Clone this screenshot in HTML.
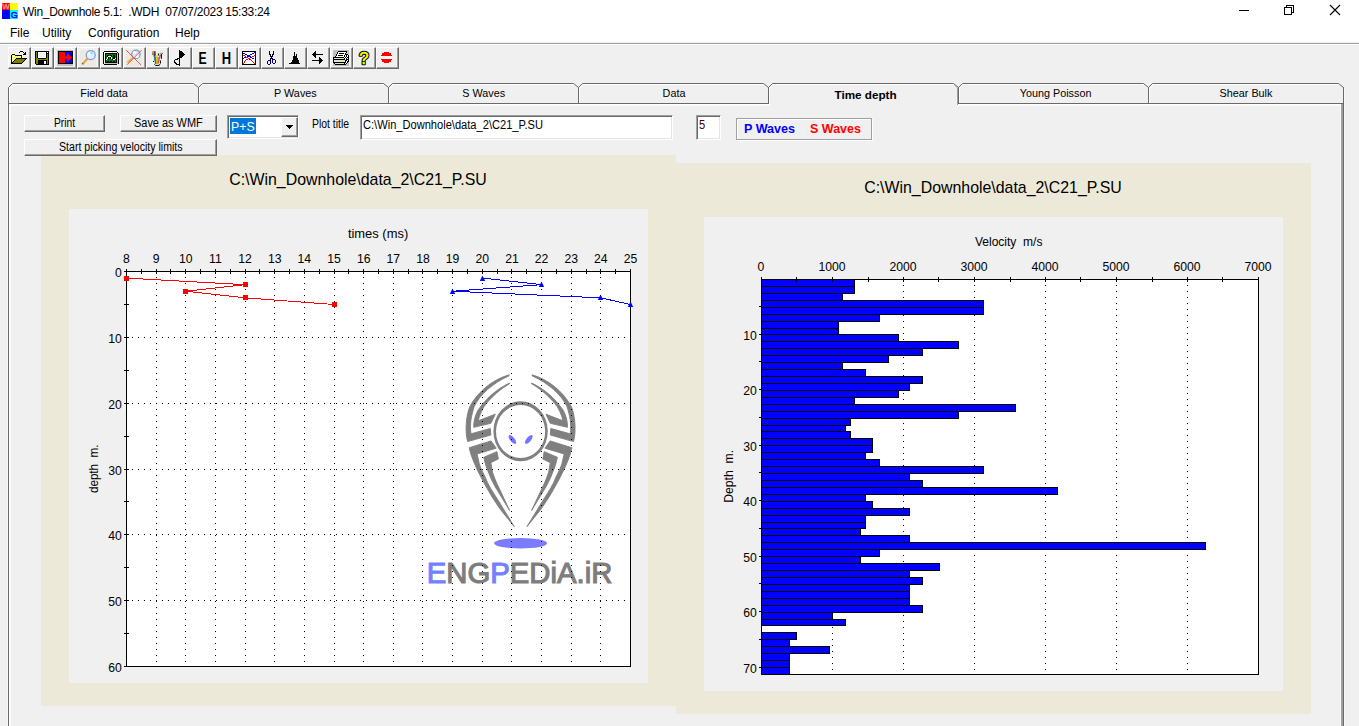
<!DOCTYPE html>
<html lang="en">
<head>
<meta charset="utf-8">
<title>Win_Downhole 5.1</title>
<style>
*{box-sizing:border-box;margin:0;padding:0}
html,body{width:1359px;height:726px;overflow:hidden;background:#f0f0f0;font-family:"Liberation Sans",sans-serif;color:#000}
.abs{position:absolute}
#win{position:relative;width:1359px;height:726px;background:#f0f0f0;overflow:hidden}
#titlebar{position:absolute;left:0;top:0;width:1359px;height:23px;background:#fff}
#menubar{position:absolute;left:0;top:23px;width:1359px;height:19px;background:#fff}
#titletext{position:absolute;left:23px;top:5px;font-size:12px;line-height:14px;white-space:pre;letter-spacing:-0.29px}
.menu{position:absolute;top:3px;font-size:12px;line-height:14px;white-space:pre}
#sep{position:absolute;left:0;top:43px;width:1359px;height:1px;background:#a0a0a0}
#sep2{position:absolute;left:0;top:44px;width:1359px;height:1px;background:#fff}
#toolbar{position:absolute;left:8px;top:47px;height:22px;width:392px}
.tb{position:absolute;top:0;width:23px;height:22px;background:#f0f0f0;border-top:1px solid #fff;border-left:1px solid #fff;border-right:1px solid #696969;border-bottom:1px solid #696969;box-shadow:inset -1px -1px 0 #a0a0a0}
.tb svg{position:absolute;left:1px;top:1px;width:18px;height:18px}
.tabtxt{position:absolute;top:87px;font-size:10.8px;line-height:13px;white-space:pre;text-align:center}
.btn{position:absolute;background:#f0f0f0;border-top:1px solid #fff;border-left:1px solid #fff;border-right:1px solid #696969;border-bottom:1px solid #696969;box-shadow:inset -1px -1px 0 #a0a0a0;font-size:11px;text-align:center;white-space:pre}
.sunken{position:absolute;background:#fff;border-top:1px solid #a0a0a0;border-left:1px solid #a0a0a0;border-right:1px solid #fff;border-bottom:1px solid #fff;box-shadow:inset 1px 1px 0 #696969, inset -1px -1px 0 #e3e3e3}
.cbsel{position:absolute;left:2px;top:2px;width:26px;height:16px;background:#0078d7}
.t{position:absolute;white-space:pre;line-height:normal;transform-origin:0 0}
.cbbtn{position:absolute;left:53px;top:1px;width:17px;height:20px;background:#f0f0f0;border-top:1px solid #fff;border-left:1px solid #fff;border-right:1px solid #696969;border-bottom:1px solid #696969;box-shadow:inset -1px -1px 0 #a0a0a0}
.cbbtn svg{position:absolute;left:4px;top:7px}
.lbl{position:absolute;font-size:11px;line-height:13px;white-space:pre}
.edtxt{position:absolute;left:3px;top:2px;font-size:11px;line-height:13px;white-space:pre}
.legend{position:absolute;background:#f0f0f0;border:1px solid #a0a0a0;box-shadow:1px 1px 0 #fff, inset 1px 1px 0 #fff}
.legend span{position:absolute;top:3px;font-size:11px;line-height:13px;font-weight:bold;white-space:pre}
.beige{position:absolute;background:#ece9d8}
.inner{position:absolute;background:#f0f0f0}
.ptitle{position:absolute;font-size:15.9px;line-height:18px;white-space:pre;text-align:center}
svg text{font-family:"Liberation Sans",sans-serif;white-space:pre}
</style>
</head>
<body>
<div id="win">
<div id="titlebar">
<svg class="abs" style="left:2px;top:3px" width="16" height="16" viewBox="0 0 16 16"><rect x="0" y="0" width="8" height="7" fill="#ff0000"/><rect x="8" y="0" width="8" height="7" fill="#ffff00"/><rect x="0" y="7" width="8" height="9" fill="#0000ff"/><rect x="8" y="7" width="8" height="9" fill="#00ffff"/><text x="4" y="6.3" font-size="7.6" text-anchor="middle" fill="#ffa0a0" stroke="#ffa0a0" stroke-width=".3" transform="translate(4 0) scale(1.05 1) translate(-4 0)">W</text><text x="12.3" y="14.7" font-size="9" text-anchor="middle" fill="#0000ff" stroke="#0000ff" stroke-width=".5">G</text></svg>
<div id="titletext">Win_Downhole 5.1:  .WDH  07/07/2023 15:33:24</div>
<svg class="abs" style="left:1220px;top:0" width="139" height="23" viewBox="0 0 139 23"><g fill="none" stroke="#000" stroke-width="1" shape-rendering="crispEdges"><path d="M19 10.5H29"/><rect x="64.5" y="7.5" width="7" height="7"/><path d="M66.5 7V5.5H73.5V12.5H72"/></g><path d="M110 5L120 15M120 5L110 15" stroke="#000" stroke-width="1.1" fill="none"/></svg>
</div>
<div id="menubar">
<span class="menu" style="left:10px">File</span>
<span class="menu" style="left:42px">Utility</span>
<span class="menu" style="left:88px">Configuration</span>
<span class="menu" style="left:175px">Help</span>
</div>
<div id="sep"></div><div id="sep2"></div>
<div id="toolbar">
<div class="tb" style="left:0px"><svg viewBox="0 0 18 18" shape-rendering="crispEdges"><path fill="#000" d="M10 2h3v1h-3zM9 3h1v1h-1zM13 3h1v1h-1zM15 3h1v1h-1zM14 4h2v1h-2zM2 5h3v1h-3zM13 5h3v1h-3zM1 6h1v1h-1zM5 6h7v1h-7zM1 7h1v1h-1zM11 7h1v1h-1zM1 8h1v1h-1zM11 8h1v1h-1zM1 9h1v1h-1zM6 9h11v1h-11zM1 10h1v1h-1zM5 10h1v1h-1zM15 10h1v1h-1zM1 11h1v1h-1zM4 11h1v1h-1zM14 11h1v1h-1zM1 12h1v1h-1zM3 12h1v1h-1zM13 12h1v1h-1zM1 13h2v1h-2zM12 13h1v1h-1zM1 14h11v1h-11z"/><path fill="#ffff00" d="M2 6h1v1h-1zM4 6h1v1h-1zM3 7h1v1h-1zM5 7h1v1h-1zM7 7h1v1h-1zM9 7h1v1h-1zM2 8h1v1h-1zM4 8h1v1h-1zM6 8h1v1h-1zM8 8h1v1h-1zM10 8h1v1h-1zM3 9h1v1h-1zM5 9h1v1h-1zM2 10h1v1h-1zM4 10h1v1h-1zM3 11h1v1h-1zM2 12h1v1h-1z"/><path fill="#fff" d="M3 6h1v1h-1zM2 7h1v1h-1zM4 7h1v1h-1zM6 7h1v1h-1zM8 7h1v1h-1zM10 7h1v1h-1zM3 8h1v1h-1zM5 8h1v1h-1zM7 8h1v1h-1zM9 8h1v1h-1zM2 9h1v1h-1zM4 9h1v1h-1zM3 10h1v1h-1zM2 11h1v1h-1z"/><path fill="#808000" d="M6 10h9v1h-9zM5 11h9v1h-9zM4 12h9v1h-9zM3 13h9v1h-9z"/></svg></div>
<div class="tb" style="left:23px"><svg viewBox="0 0 18 18" shape-rendering="crispEdges"><path fill="#000" d="M2 2h14v1h-14zM2 3h1v1h-1zM4 3h1v1h-1zM13 3h1v1h-1zM15 3h1v1h-1zM2 4h1v1h-1zM4 4h1v1h-1zM13 4h3v1h-3zM2 5h1v1h-1zM4 5h1v1h-1zM13 5h1v1h-1zM15 5h1v1h-1zM2 6h1v1h-1zM4 6h1v1h-1zM13 6h1v1h-1zM15 6h1v1h-1zM2 7h1v1h-1zM4 7h1v1h-1zM13 7h1v1h-1zM15 7h1v1h-1zM2 8h1v1h-1zM4 8h1v1h-1zM13 8h1v1h-1zM15 8h1v1h-1zM2 9h1v1h-1zM5 9h8v1h-8zM15 9h1v1h-1zM2 10h1v1h-1zM15 10h1v1h-1zM2 11h1v1h-1zM5 11h9v1h-9zM15 11h1v1h-1zM2 12h1v1h-1zM5 12h6v1h-6zM13 12h1v1h-1zM15 12h1v1h-1zM2 13h1v1h-1zM5 13h6v1h-6zM13 13h1v1h-1zM15 13h1v1h-1zM2 14h1v1h-1zM5 14h6v1h-6zM13 14h1v1h-1zM15 14h1v1h-1zM3 15h13v1h-13z"/><path fill="#808000" d="M3 3h1v1h-1zM3 4h1v1h-1zM3 5h1v1h-1zM14 5h1v1h-1zM3 6h1v1h-1zM14 6h1v1h-1zM3 7h1v1h-1zM14 7h1v1h-1zM3 8h1v1h-1zM14 8h1v1h-1zM3 9h2v1h-2zM13 9h2v1h-2zM3 10h12v1h-12zM3 11h2v1h-2zM14 11h1v1h-1zM3 12h2v1h-2zM14 12h1v1h-1zM3 13h2v1h-2zM14 13h1v1h-1zM3 14h2v1h-2zM14 14h1v1h-1z"/><path fill="#fff" d="M5 3h8v1h-8zM14 3h1v1h-1zM5 4h1v1h-1zM12 4h1v1h-1zM5 5h1v1h-1zM12 5h1v1h-1zM5 6h1v1h-1zM12 6h1v1h-1zM5 7h1v1h-1zM12 7h1v1h-1zM5 8h8v1h-8zM11 12h2v1h-2zM11 13h2v1h-2zM11 14h2v1h-2z"/></svg></div>
<div class="tb" style="left:46px"><svg viewBox="0 0 18 18" shape-rendering="crispEdges"><path fill="#c0c0c0" d="M1 1h16v1h-16zM1 2h1v1h-1zM1 3h1v1h-1zM1 4h1v1h-1zM1 5h1v1h-1zM1 6h1v1h-1zM1 7h1v1h-1zM1 8h1v1h-1zM1 9h1v1h-1zM1 10h1v1h-1zM1 11h1v1h-1zM1 12h1v1h-1zM1 13h1v1h-1zM1 14h1v1h-1zM1 15h16v1h-16zM1 16h16v1h-16z"/><path fill="#000" d="M2 2h15v1h-15zM2 3h1v1h-1zM16 3h1v1h-1zM2 4h1v1h-1zM16 4h1v1h-1zM2 5h1v1h-1zM16 5h1v1h-1zM2 6h1v1h-1zM16 6h1v1h-1zM2 7h1v1h-1zM16 7h1v1h-1zM2 8h1v1h-1zM16 8h1v1h-1zM2 9h1v1h-1zM16 9h1v1h-1zM2 10h1v1h-1zM16 10h1v1h-1zM2 11h1v1h-1zM16 11h1v1h-1zM2 12h1v1h-1zM16 12h1v1h-1zM2 13h1v1h-1zM16 13h1v1h-1zM2 14h15v1h-15z"/><path fill="#ff0000" d="M3 3h6v1h-6zM3 4h6v1h-6zM11 4h1v1h-1zM3 5h6v1h-6zM11 5h2v1h-2zM3 6h6v1h-6zM11 6h3v1h-3zM3 7h12v1h-12zM3 8h13v1h-13zM3 9h12v1h-12zM3 10h6v1h-6zM11 10h3v1h-3zM3 11h6v1h-6zM11 11h2v1h-2zM3 12h6v1h-6zM11 12h1v1h-1zM3 13h6v1h-6z"/><path fill="#0000ff" d="M9 3h7v1h-7zM9 4h2v1h-2zM12 4h4v1h-4zM9 5h2v1h-2zM13 5h3v1h-3zM9 6h2v1h-2zM14 6h2v1h-2zM15 7h1v1h-1zM15 9h1v1h-1zM9 10h2v1h-2zM14 10h2v1h-2zM9 11h2v1h-2zM13 11h3v1h-3zM9 12h2v1h-2zM12 12h4v1h-4zM9 13h7v1h-7z"/></svg></div>
<div class="tb" style="left:69px"><svg viewBox="0 0 18 18" shape-rendering="crispEdges"><g shape-rendering="auto"><rect x="1" y="1" width="16" height="16" fill="#ece9e2"/><path d="M8.2 10L4.2 14.2" stroke="#e8a040" stroke-width="2.1" stroke-linecap="round"/><path d="M4.3 15.4L3 14.2" stroke="#6a6a30" stroke-width="1.2"/><circle cx="11.7" cy="6.1" r="4.5" fill="#d8f4ff" stroke="#8f90d8" stroke-width="1.2"/><circle cx="10.6" cy="4.8" r="1.6" fill="#fff"/><circle cx="12.6" cy="3.9" r="1.5" fill="#98e4ff"/></g></svg></div>
<div class="tb" style="left:92px"><svg viewBox="0 0 18 18" shape-rendering="crispEdges"><path fill="#000" d="M2 2h13v1h-13zM1 3h1v1h-1zM15 3h1v1h-1zM1 4h1v1h-1zM3 4h12v1h-12zM16 4h1v1h-1zM1 5h1v1h-1zM3 5h1v1h-1zM14 5h1v1h-1zM16 5h1v1h-1zM1 6h1v1h-1zM3 6h1v1h-1zM5 6h2v1h-2zM8 6h2v1h-2zM11 6h2v1h-2zM14 6h1v1h-1zM16 6h1v1h-1zM1 7h1v1h-1zM3 7h1v1h-1zM5 7h1v1h-1zM9 7h1v1h-1zM11 7h2v1h-2zM14 7h1v1h-1zM16 7h1v1h-1zM1 8h1v1h-1zM3 8h1v1h-1zM6 8h1v1h-1zM8 8h1v1h-1zM11 8h2v1h-2zM14 8h1v1h-1zM16 8h1v1h-1zM1 9h1v1h-1zM3 9h1v1h-1zM6 9h1v1h-1zM8 9h1v1h-1zM11 9h2v1h-2zM14 9h1v1h-1zM16 9h1v1h-1zM1 10h1v1h-1zM3 10h1v1h-1zM10 10h1v1h-1zM14 10h1v1h-1zM16 10h1v1h-1zM1 11h1v1h-1zM3 11h1v1h-1zM14 11h1v1h-1zM16 11h1v1h-1zM1 12h1v1h-1zM3 12h1v1h-1zM5 12h2v1h-2zM8 12h2v1h-2zM11 12h2v1h-2zM14 12h1v1h-1zM16 12h1v1h-1zM1 13h1v1h-1zM3 13h12v1h-12zM16 13h1v1h-1zM1 14h1v1h-1zM16 14h1v1h-1zM2 15h13v1h-13z"/><path fill="#fff" d="M2 3h13v1h-13zM2 4h1v1h-1zM2 5h1v1h-1zM2 6h1v1h-1zM2 7h1v1h-1zM6 7h3v1h-3zM2 8h1v1h-1zM5 8h1v1h-1zM9 8h1v1h-1zM2 9h1v1h-1zM5 9h1v1h-1zM9 9h1v1h-1zM13 9h1v1h-1zM2 10h1v1h-1zM4 10h1v1h-1zM11 10h2v1h-2zM2 11h1v1h-1zM2 12h1v1h-1zM2 13h1v1h-1zM2 14h1v1h-1z"/><path fill="#c0c0c0" d="M15 4h1v1h-1zM15 5h1v1h-1zM15 6h1v1h-1zM15 7h1v1h-1zM15 8h1v1h-1zM15 9h1v1h-1zM15 10h1v1h-1zM15 11h1v1h-1zM15 12h1v1h-1zM15 13h1v1h-1zM3 14h13v1h-13z"/><path fill="#008000" d="M4 5h10v1h-10zM4 6h1v1h-1zM7 6h1v1h-1zM10 6h1v1h-1zM13 6h1v1h-1zM4 7h1v1h-1zM10 7h1v1h-1zM13 7h1v1h-1zM4 8h1v1h-1zM7 8h1v1h-1zM10 8h1v1h-1zM13 8h1v1h-1zM4 9h1v1h-1zM7 9h1v1h-1zM10 9h1v1h-1zM5 10h5v1h-5zM13 10h1v1h-1zM4 11h10v1h-10zM4 12h1v1h-1zM7 12h1v1h-1zM10 12h1v1h-1zM13 12h1v1h-1z"/></svg></div>
<div class="tb" style="left:115px"><svg viewBox="0 0 18 18" shape-rendering="crispEdges"><g shape-rendering="auto"><rect x="1" y="1" width="16" height="16" fill="#ece9e2"/><path d="M7.2 9.6L3 13" stroke="#f0a840" stroke-width="1.9" stroke-linecap="round"/><circle cx="10.9" cy="5.3" r="4.2" fill="#d4ecf8" stroke="#8890c8" stroke-width="1.1"/><circle cx="9.4" cy="3.6" r="1.4" fill="#fff"/><circle cx="12.3" cy="7.8" r="1.3" fill="#fff"/><path d="M1 1L16 16M16.5 1.2L2 15.8" stroke="#e04030" stroke-width="0.9" fill="none" opacity=".9"/></g></svg></div>
<div class="tb" style="left:138px"><svg viewBox="0 0 18 18" shape-rendering="crispEdges"><g shape-rendering="auto"><path d="M5.2 8.5L6.6 15.6Q9 17.2 11.6 15.6L13 8.5Z" fill="#d8f6ff"/><path d="M4.4 2.4L6.6 2.2L9 14.5L7.4 14.8Z" fill="#4068d8"/><path d="M4.2 2.2H6.8V4.8L4.2 5.2Z" fill="#ff8018"/><path d="M7 2.2V6.5" stroke="#000" stroke-width="1"/><path d="M8 6.5L9.6 6.2L9.8 15L8.4 15Z" fill="#ffc800"/><path d="M6.2 8.4L7.8 8.2L8.4 15L7 15Z" fill="#209020"/><path d="M9.6 8L10.6 8L10.4 14L9.6 14Z" fill="#2878e0"/><path d="M11.6 5.6L13 6L10.4 15L9.4 14.6Z" fill="#ff4810"/><path d="M11.4 4.6L13.2 3.4L14 4.6L12.8 5.8Z" fill="#9090e0"/><path d="M10.4 4.5V6.5M13.4 5V9.8M14.4 4.4H15M4.4 5.2H5M12.4 11.4V14.6" stroke="#000" stroke-width="1"/><path d="M5 12.4H6M6.4 15.4L7.4 16.4H11.2L11.8 15.2" stroke="#000" stroke-width="1" fill="none"/></g></svg></div>
<div class="tb" style="left:161px"><svg viewBox="0 0 18 18" shape-rendering="crispEdges"><path fill="#000" d="M8 1h1v1h-1zM8 2h3v1h-3zM8 3h4v1h-4zM8 4h5v1h-5zM8 5h6v1h-6zM8 6h5v1h-5zM8 7h4v1h-4zM8 8h3v1h-3zM6 9h3v1h-3zM4 10h3v1h-3zM8 10h1v1h-1zM3 11h1v1h-1zM8 11h1v1h-1zM3 12h1v1h-1zM8 12h1v1h-1zM3 13h2v1h-2zM8 13h1v1h-1zM4 14h2v1h-2zM8 14h1v1h-1zM5 15h4v1h-4zM8 16h1v1h-1z"/></svg></div>
<div class="tb" style="left:184px"><svg viewBox="0 0 18 18" shape-rendering="crispEdges"><text x="8.6" y="15" font-size="16.6" font-weight="bold" text-anchor="middle" transform="translate(8.6 0) scale(.74 1) translate(-8.6 0)" shape-rendering="auto" fill="#000">E</text></svg></div>
<div class="tb" style="left:207px"><svg viewBox="0 0 18 18" shape-rendering="crispEdges"><text x="9.5" y="15" font-size="16.6" font-weight="bold" text-anchor="middle" transform="translate(9.5 0) scale(.78 1) translate(-9.5 0)" shape-rendering="auto" fill="#000">H</text></svg></div>
<div class="tb" style="left:230px"><svg viewBox="0 0 18 18" shape-rendering="crispEdges"><path fill="#000" d="M2 2h14v1h-14zM2 3h1v1h-1zM15 3h1v1h-1zM2 4h1v1h-1zM15 4h1v1h-1zM2 5h1v1h-1zM15 5h1v1h-1zM2 6h1v1h-1zM15 6h1v1h-1zM2 7h1v1h-1zM15 7h1v1h-1zM2 8h1v1h-1zM15 8h1v1h-1zM2 9h1v1h-1zM15 9h1v1h-1zM2 10h1v1h-1zM15 10h1v1h-1zM2 11h1v1h-1zM15 11h1v1h-1zM2 12h1v1h-1zM15 12h1v1h-1zM2 13h1v1h-1zM15 13h1v1h-1zM2 14h1v1h-1zM15 14h1v1h-1zM2 15h14v1h-14z"/><path fill="#fff" d="M3 3h11v1h-11zM5 4h7v1h-7zM14 4h1v1h-1zM3 5h2v1h-2zM7 5h3v1h-3zM12 5h3v1h-3zM5 6h2v1h-2zM10 6h4v1h-4zM3 7h2v1h-2zM6 7h1v1h-1zM11 7h1v1h-1zM14 7h1v1h-1zM3 8h1v1h-1zM8 8h2v1h-2zM12 8h3v1h-3zM4 9h4v1h-4zM10 9h2v1h-2zM14 9h1v1h-1zM3 10h3v1h-3zM8 10h1v1h-1zM11 10h4v1h-4zM3 11h2v1h-2zM6 11h5v1h-5zM12 11h3v1h-3zM3 12h1v1h-1zM5 12h7v1h-7zM13 12h2v1h-2zM3 13h1v1h-1zM5 13h8v1h-8zM14 13h1v1h-1zM4 14h10v1h-10z"/><path fill="#0000ff" d="M14 3h1v1h-1zM3 4h2v1h-2zM12 4h2v1h-2zM5 5h2v1h-2zM10 5h2v1h-2zM7 6h3v1h-3zM7 7h4v1h-4zM4 8h2v1h-2zM10 8h2v1h-2zM3 9h1v1h-1zM12 9h2v1h-2z"/><path fill="#ff0000" d="M3 6h2v1h-2zM14 6h1v1h-1zM5 7h1v1h-1zM12 7h2v1h-2zM6 8h2v1h-2zM8 9h2v1h-2zM6 10h2v1h-2zM9 10h2v1h-2zM5 11h1v1h-1zM11 11h1v1h-1zM4 12h1v1h-1zM12 12h1v1h-1zM4 13h1v1h-1zM13 13h1v1h-1zM3 14h1v1h-1zM14 14h1v1h-1z"/></svg></div>
<div class="tb" style="left:253px"><svg viewBox="0 0 18 18" shape-rendering="crispEdges"><path fill="#000" d="M6 2h1v1h-1zM10 2h1v1h-1zM6 3h1v1h-1zM10 3h1v1h-1zM6 4h1v1h-1zM10 4h1v1h-1zM6 5h2v1h-2zM9 5h2v1h-2zM7 6h1v1h-1zM9 6h1v1h-1zM7 7h3v1h-3zM8 8h1v1h-1zM8 9h1v1h-1z"/><path fill="#000080" d="M7 9h1v1h-1zM9 9h1v1h-1zM7 10h1v1h-1zM9 10h3v1h-3zM5 11h3v1h-3zM9 11h1v1h-1zM12 11h1v1h-1zM4 12h1v1h-1zM7 12h1v1h-1zM9 12h1v1h-1zM12 12h1v1h-1zM4 13h1v1h-1zM7 13h1v1h-1zM9 13h1v1h-1zM12 13h1v1h-1zM4 14h1v1h-1zM7 14h1v1h-1zM10 14h2v1h-2zM5 15h2v1h-2z"/></svg></div>
<div class="tb" style="left:276px"><svg viewBox="0 0 18 18" shape-rendering="crispEdges"><path fill="#000" d="M8 3h1v1h-1zM8 4h1v1h-1zM8 5h1v1h-1zM10 5h1v1h-1zM8 6h1v1h-1zM10 6h1v1h-1zM7 7h4v1h-4zM7 8h4v1h-4zM7 9h5v1h-5zM7 10h5v1h-5zM6 11h7v1h-7zM6 12h7v1h-7zM5 13h8v1h-8zM3 14h11v1h-11z"/></svg></div>
<div class="tb" style="left:299px"><svg viewBox="0 0 18 18" shape-rendering="crispEdges"><path fill="#000" d="M6 2h1v1h-1zM5 3h2v1h-2zM4 4h3v1h-3zM3 5h11v1h-11zM4 6h3v1h-3zM5 7h2v1h-2zM6 8h1v1h-1zM10 8h1v1h-1zM10 9h2v1h-2zM10 10h3v1h-3zM3 11h11v1h-11zM10 12h3v1h-3zM10 13h2v1h-2zM10 14h1v1h-1z"/></svg></div>
<div class="tb" style="left:322px"><svg viewBox="0 0 18 18" shape-rendering="crispEdges"><path fill="#c0c0c0" d="M1 1h16v1h-16zM1 2h5v1h-5zM15 2h2v1h-2zM1 3h4v1h-4zM15 3h2v1h-2zM1 4h4v1h-4zM14 4h3v1h-3zM1 5h3v1h-3zM16 5h1v1h-1zM1 6h3v1h-3zM1 7h2v1h-2zM16 13h1v1h-1zM1 14h1v1h-1zM15 14h2v1h-2zM1 15h2v1h-2zM14 15h3v1h-3zM1 16h16v1h-16z"/><path fill="#000" d="M6 2h9v1h-9zM5 3h1v1h-1zM14 3h1v1h-1zM5 4h1v1h-1zM7 4h5v1h-5zM13 4h1v1h-1zM4 5h1v1h-1zM13 5h3v1h-3zM4 6h1v1h-1zM6 6h5v1h-5zM12 6h1v1h-1zM14 6h1v1h-1zM16 6h1v1h-1zM3 7h1v1h-1zM12 7h1v1h-1zM14 7h1v1h-1zM16 7h1v1h-1zM1 8h11v1h-11zM13 8h1v1h-1zM15 8h2v1h-2zM1 9h1v1h-1zM12 9h1v1h-1zM14 9h1v1h-1zM16 9h1v1h-1zM1 10h12v1h-12zM14 10h3v1h-3zM1 11h1v1h-1zM13 11h2v1h-2zM16 11h1v1h-1zM1 12h1v1h-1zM13 12h1v1h-1zM15 12h2v1h-2zM1 13h13v1h-13zM15 13h1v1h-1zM2 14h1v1h-1zM12 14h1v1h-1zM14 14h1v1h-1zM3 15h11v1h-11z"/><path fill="#fff" d="M6 3h8v1h-8zM6 4h1v1h-1zM12 4h1v1h-1zM5 5h8v1h-8zM5 6h1v1h-1zM11 6h1v1h-1zM13 6h1v1h-1zM15 6h1v1h-1zM4 7h8v1h-8zM13 7h1v1h-1zM15 7h1v1h-1zM12 8h1v1h-1zM14 8h1v1h-1zM13 9h1v1h-1zM15 9h1v1h-1zM13 10h1v1h-1zM15 11h1v1h-1zM14 12h1v1h-1zM14 13h1v1h-1zM13 14h1v1h-1z"/><path fill="#e0e0e0" d="M2 9h10v1h-10zM2 11h11v1h-11zM2 12h6v1h-6zM11 12h2v1h-2zM3 14h9v1h-9z"/><path fill="#ffff00" d="M8 12h3v1h-3z"/></svg></div>
<div class="tb" style="left:345px"><svg viewBox="0 0 18 18" shape-rendering="crispEdges"><g shape-rendering="auto" opacity=".999"><text x="9" y="14.6" font-size="16.8" text-anchor="middle" fill="#000" stroke="#000" stroke-width="2.7" stroke-linejoin="round">?</text><text x="9" y="14.6" font-size="16.8" text-anchor="middle" fill="#ffff00" stroke="#ffff00" stroke-width=".5">?</text></g></svg></div>
<div class="tb" style="left:368px"><svg viewBox="0 0 18 18" shape-rendering="crispEdges"><path fill="#ff0000" d="M6 3h5v1h-5zM4 4h9v1h-9zM4 5h9v1h-9zM3 6h11v1h-11zM3 10h11v1h-11zM4 11h9v1h-9zM4 12h9v1h-9zM6 13h5v1h-5z"/><path fill="#fff" d="M3 7h11v1h-11zM3 8h11v1h-11zM3 9h11v1h-11z"/></svg></div>
</div>
<svg class="abs" style="left:0;top:78px" width="1359" height="648" viewBox="0 78 1359 648">
<path d="M8.5 726V103.5" stroke="#696969" fill="none"/>
<path d="M7.5 726V104" stroke="#f8f8f8" fill="none"/>
<path d="M9.5 726V104.5H1342" stroke="#fff" fill="none"/>
<path d="M10.5 726V105.5H1342" stroke="#fafafa" fill="none"/>
<path d="M1344.5 88V726" stroke="#f8f8f8" fill="none"/>
<path d="M1340.5 106V726" stroke="#f8f8f8" fill="none"/>
<path d="M1342 104V726" stroke="#a0a0a0" stroke-width="2" fill="none"/>
<path d="M1343.5 87V726" stroke="#696969" fill="none"/>
<path d="M8 103.5H1344" stroke="#696969" fill="none"/>
<path d="M9.5 103V88.2L13 84.5H193.5" stroke="#fff" fill="none"/>
<path d="M8.5 103.5V87.5L12.5 83.5H193.5L198.5 87.5V103.5" stroke="#696969" fill="none"/>
<path d="M199.5 103V88.2L203 84.5H383.5" stroke="#fff" fill="none"/>
<path d="M198.5 103.5V87.5L202.5 83.5H383.5L388.5 87.5V103.5" stroke="#696969" fill="none"/>
<path d="M389.5 103V88.2L393 84.5H573.5" stroke="#fff" fill="none"/>
<path d="M388.5 103.5V87.5L392.5 83.5H573.5L578.5 87.5V103.5" stroke="#696969" fill="none"/>
<path d="M579.5 103V88.2L583 84.5H763.5" stroke="#fff" fill="none"/>
<path d="M578.5 103.5V87.5L582.5 83.5H763.5L768.5 87.5V103.5" stroke="#696969" fill="none"/>
<path d="M769.5 103V88.2L773 84.5H953.5" stroke="#fff" fill="none"/>
<path d="M768.5 103.5V87.5L772.5 83.5H953.5L958.5 87.5V103.5" stroke="#696969" fill="none"/>
<path d="M959.5 103V88.2L963 84.5H1143.5" stroke="#fff" fill="none"/>
<path d="M958.5 103.5V87.5L962.5 83.5H1143.5L1148.5 87.5V103.5" stroke="#696969" fill="none"/>
<path d="M1149.5 103V88.2L1153 84.5H1338.5" stroke="#fff" fill="none"/>
<path d="M1148.5 103.5V87.5L1152.5 83.5H1338.5L1343.5 87.5V103.5" stroke="#696969" fill="none"/>
<rect x="769" y="103" width="188" height="3" fill="#f0f0f0"/>
<path d="M769.5 106V89" stroke="#fff" fill="none"/>
<path d="M957.5 105V88L955 85.5" stroke="#a0a0a0" fill="none"/>
<path d="M958.5 104V87.5" stroke="#696969" fill="none"/>
</svg>
<div id="tabtexts">
<div class="tabtxt" style="left:4px;width:200px">Field data</div>
<div class="tabtxt" style="left:195.4px;width:200px">P Waves</div>
<div class="tabtxt" style="left:383.75px;width:200px">S Waves</div>
<div class="tabtxt" style="left:574px;width:200px">Data</div>
<div class="tabtxt" style="left:765.6px;width:200px;font-weight:bold;font-size:11.7px;top:88px">Time depth</div>
<div class="tabtxt" style="left:955.6px;width:200px">Young Poisson</div>
<div class="tabtxt" style="left:1146px;width:200px">Shear Bulk</div>
</div>
<div id="controls" style="position:absolute;left:0;top:0;z-index:5">
<div class="btn" style="left:24px;top:115px;width:81px;height:17px"></div>
<span class="t" style="left:54.4px;top:116px;font-size:12px;transform:scaleX(0.8511)">Print</span>
<div class="btn" style="left:120px;top:115px;width:97px;height:17px"></div>
<span class="t" style="left:134.1px;top:116px;font-size:12px;transform:scaleX(0.9118)">Save as WMF</span>
<div class="btn" style="left:24px;top:139px;width:193px;height:17px"></div>
<span class="t" style="left:59.4px;top:140px;font-size:12px;transform:scaleX(0.8826)">Start picking velocity limits</span>
<div class="sunken" style="left:227px;top:115px;width:72px;height:24px"><div class="cbsel"></div><div class="cbbtn"><svg width="7" height="4" viewBox="0 0 7 4" shape-rendering="crispEdges"><path d="M0 0H7L3.5 4Z" fill="#000"/></svg></div></div>
<span class="t" style="left:230.6px;top:119px;font-size:13.7px;transform:scaleX(0.9057);color:#fff">P+S</span>
<span class="t" style="left:312.4px;top:117px;font-size:12px;transform:scaleX(0.8668)">Plot title</span>
<div class="sunken" style="left:360px;top:115px;width:313px;height:25px"></div>
<span class="t" style="left:363.4px;top:118px;font-size:12px;transform:scaleX(0.9251)">C:\Win_Downhole\data_2\C21_P.SU</span>
<div class="sunken" style="left:696px;top:115px;width:25px;height:25px"></div>
<span class="t" style="left:699.2px;top:118px;font-size:12px;transform:scaleX(0.9290);color:#400000">5</span>
<div class="legend" style="left:736px;top:118px;width:136px;height:22px"></div>
<span class="t" style="left:744.3px;top:122px;font-size:12.3px;transform:scaleX(1.0237);font-weight:bold;color:#0000ff">P Waves</span>
<span class="t" style="left:810.4px;top:122px;font-size:12.3px;transform:scaleX(1.0172);font-weight:bold;color:#ff0000">S Waves</span>
</div>
<div class="beige" style="left:41px;top:155px;width:635px;height:551px"></div>
<div class="beige" style="left:676px;top:163px;width:635px;height:551px"></div>
<div class="inner" style="left:69px;top:209px;width:579px;height:474px"></div>
<div class="inner" style="left:704px;top:217px;width:579px;height:474px"></div>
<div class="ptitle" style="left:158px;top:171px;width:400px">C:\Win_Downhole\data_2\C21_P.SU</div>
<div class="ptitle" style="left:793px;top:179px;width:400px">C:\Win_Downhole\data_2\C21_P.SU</div>
<svg class="abs" style="left:69px;top:209px" width="579" height="474" viewBox="69 209 579 474">
<rect x="126" y="271" width="504" height="395" fill="#fff"/>
<g transform="translate(455 365) scale(0.23425)" fill="#808080" stroke="#808080" stroke-width="4" stroke-linejoin="round"><path d="M231 42C162 62 101 110 64 176C47 215 42 284 54 327L153 299L151 271L68 294C62 250 70 215 82 177C105 128 160 78 231 46Z"/><path d="M233 77C176 103 130 146 97 195C84 220 79 245 80 266L153 249L172 210L99 238C104 215 118 180 139 158C160 135 190 105 233 80Z"/><path d="M154 324L61 353C66 380 75 400 83 420C100 460 140 540 194 617L253 690L182 574C160 540 140 510 130 481C115 450 105 430 102 414L94 380L176 355Z"/><path d="M179 370L123 394C128 420 135 440 145 463C155 490 168 515 182 537L233 621L188 525C175 500 168 480 160 457L153 417L185 401Z"/><g transform="translate(560 0) scale(-1 1)"><path d="M231 42C162 62 101 110 64 176C47 215 42 284 54 327L153 299L151 271L68 294C62 250 70 215 82 177C105 128 160 78 231 46Z"/><path d="M233 77C176 103 130 146 97 195C84 220 79 245 80 266L153 249L172 210L99 238C104 215 118 180 139 158C160 135 190 105 233 80Z"/><path d="M154 324L61 353C66 380 75 400 83 420C100 460 140 540 194 617L253 690L182 574C160 540 140 510 130 481C115 450 105 430 102 414L94 380L176 355Z"/><path d="M179 370L123 394C128 420 135 440 145 463C155 490 168 515 182 537L233 621L188 525C175 500 168 480 160 457L153 417L185 401Z"/></g><ellipse cx="280" cy="283" rx="116" ry="128" stroke="none"/><ellipse cx="280" cy="284" rx="105" ry="113" fill="#fff" stroke="none"/><ellipse cx="245" cy="318" rx="23" ry="9.5" fill="#7373ff" stroke="none" transform="rotate(50 245 318)"/><ellipse cx="315" cy="318" rx="23" ry="9.5" fill="#7373ff" stroke="none" transform="rotate(-50 315 318)"/></g><ellipse cx="520.6" cy="543.2" rx="26.5" ry="5.2" fill="#7b7bff"/><defs><linearGradient id="lgtxt" x1="0" y1="0" x2="1" y2="0"><stop offset="0" stop-color="#7480ff"/><stop offset="0.1045" stop-color="#7480ff"/><stop offset="0.1045" stop-color="#7d7d7d"/><stop offset="0.3425" stop-color="#7d7d7d"/><stop offset="0.3425" stop-color="#7480ff"/><stop offset="0.447" stop-color="#7480ff"/><stop offset="0.447" stop-color="#7d7d7d"/><stop offset="1" stop-color="#7d7d7d"/></linearGradient></defs><text x="426.8" y="583" font-size="29.5" fill="url(#lgtxt)" stroke="url(#lgtxt)" stroke-width="1.1" textLength="185.6" lengthAdjust="spacingAndGlyphs">ENGPEDiA.iR</text>
<g stroke="#000" stroke-width="1" stroke-dasharray="1 5" fill="none" shape-rendering="crispEdges"><path d="M156.5 277V665"/><path d="M185.5 277V665"/><path d="M215.5 277V665"/><path d="M245.5 277V665"/><path d="M274.5 277V665"/><path d="M304.5 277V665"/><path d="M334.5 277V665"/><path d="M363.5 277V665"/><path d="M393.5 277V665"/><path d="M422.5 277V665"/><path d="M452.5 277V665"/><path d="M482.5 277V665"/><path d="M511.5 277V665"/><path d="M541.5 277V665"/><path d="M571.5 277V665"/><path d="M600.5 277V665"/><path d="M132 337.5H629"/><path d="M132 403.5H629"/><path d="M132 469.5H629"/><path d="M132 534.5H629"/><path d="M132 600.5H629"/></g>
<g stroke="#000" stroke-width="1" fill="none" shape-rendering="crispEdges"><path d="M126.5 271.5H630.5V666.5H126.5Z"/><path d="M126.5 269V274"/><path d="M141.5 269V274"/><path d="M156.5 269V274"/><path d="M170.5 269V274"/><path d="M185.5 269V274"/><path d="M200.5 269V274"/><path d="M215.5 269V274"/><path d="M230.5 269V274"/><path d="M245.5 269V274"/><path d="M259.5 269V274"/><path d="M274.5 269V274"/><path d="M289.5 269V274"/><path d="M304.5 269V274"/><path d="M319.5 269V274"/><path d="M334.5 269V274"/><path d="M348.5 269V274"/><path d="M363.5 269V274"/><path d="M378.5 269V274"/><path d="M393.5 269V274"/><path d="M408.5 269V274"/><path d="M422.5 269V274"/><path d="M437.5 269V274"/><path d="M452.5 269V274"/><path d="M467.5 269V274"/><path d="M482.5 269V274"/><path d="M497.5 269V274"/><path d="M511.5 269V274"/><path d="M526.5 269V274"/><path d="M541.5 269V274"/><path d="M556.5 269V274"/><path d="M571.5 269V274"/><path d="M586.5 269V274"/><path d="M600.5 269V274"/><path d="M615.5 269V274"/><path d="M630.5 269V274"/><path d="M124 271.5H129"/><path d="M124 304.5H129"/><path d="M124 337.5H129"/><path d="M124 370.5H129"/><path d="M124 403.5H129"/><path d="M124 436.5H129"/><path d="M124 469.5H129"/><path d="M124 501.5H129"/><path d="M124 534.5H129"/><path d="M124 567.5H129"/><path d="M124 600.5H129"/><path d="M124 633.5H129"/><path d="M124 666.5H129"/></g>
<g font-size="12.2" fill="#000"><text x="126.5" y="263" text-anchor="middle">8</text><text x="156.15" y="263" text-anchor="middle">9</text><text x="185.79" y="263" text-anchor="middle">10</text><text x="215.44" y="263" text-anchor="middle">11</text><text x="245.09" y="263" text-anchor="middle">12</text><text x="274.74" y="263" text-anchor="middle">13</text><text x="304.38" y="263" text-anchor="middle">14</text><text x="334.03" y="263" text-anchor="middle">15</text><text x="363.68" y="263" text-anchor="middle">16</text><text x="393.32" y="263" text-anchor="middle">17</text><text x="422.97" y="263" text-anchor="middle">18</text><text x="452.62" y="263" text-anchor="middle">19</text><text x="482.26" y="263" text-anchor="middle">20</text><text x="511.91" y="263" text-anchor="middle">21</text><text x="541.56" y="263" text-anchor="middle">22</text><text x="571.21" y="263" text-anchor="middle">23</text><text x="600.85" y="263" text-anchor="middle">24</text><text x="630.5" y="263" text-anchor="middle">25</text><text x="121.7" y="277" text-anchor="end">0</text><text x="121.7" y="343" text-anchor="end">10</text><text x="121.7" y="409" text-anchor="end">20</text><text x="121.7" y="475" text-anchor="end">30</text><text x="121.7" y="540" text-anchor="end">40</text><text x="121.7" y="606" text-anchor="end">50</text><text x="121.7" y="672" text-anchor="end">60</text><text x="347.9" y="238" font-size="12.8" textLength="60.3" lengthAdjust="spacingAndGlyphs">times (ms)</text><text transform="translate(97.5 468.8) rotate(-90)" text-anchor="middle" textLength="48.5" lengthAdjust="spacingAndGlyphs">depth  m.</text></g>
<polyline points="126.5,278.08 245.09,284.67 185.79,291.25 245.09,297.83 334.03,304.5" stroke="#ff0000" stroke-width="1" fill="none" shape-rendering="crispEdges"/>
<rect x="124" y="276" width="5" height="5" fill="#ff0000"/>
<rect x="243" y="282" width="5" height="5" fill="#ff0000"/>
<rect x="183" y="289" width="5" height="5" fill="#ff0000"/>
<rect x="243" y="295" width="5" height="5" fill="#ff0000"/>
<rect x="332" y="302" width="5" height="5" fill="#ff0000"/>
<polyline points="482.26,278.08 541.56,284.67 452.62,291.25 600.85,297.83 630.5,304.5" stroke="#0000ff" stroke-width="1" fill="none" shape-rendering="crispEdges"/>
<path d="M482.5 275.6L485.2 281H479.8Z" fill="#0000ff"/>
<path d="M541.5 281.6L544.2 287H538.8Z" fill="#0000ff"/>
<path d="M452.5 288.6L455.2 294H449.8Z" fill="#0000ff"/>
<path d="M600.5 294.6L603.2 300H597.8Z" fill="#0000ff"/>
<path d="M630.5 301.6L633.2 307H627.8Z" fill="#0000ff"/>
</svg>
<svg class="abs" style="left:704px;top:217px" width="579" height="474" viewBox="704 217 579 474">
<rect x="761" y="279" width="497" height="395" fill="#fff"/>
<g stroke="#000" stroke-width="1" stroke-dasharray="1 5" fill="none" shape-rendering="crispEdges"><path d="M832.5 285V673"/><path d="M903.5 285V673"/><path d="M974.5 285V673"/><path d="M1045.5 285V673"/><path d="M1116.5 285V673"/><path d="M1187.5 285V673"/></g>
<g fill="#0000ff" stroke="#000" stroke-width="1" shape-rendering="crispEdges"><rect x="761.5" y="279.5" width="93" height="7"/><rect x="761.5" y="286.5" width="93" height="7"/><rect x="761.5" y="293.5" width="81" height="7"/><rect x="761.5" y="300.5" width="222" height="7"/><rect x="761.5" y="307.5" width="222" height="7"/><rect x="761.5" y="314.5" width="118" height="7"/><rect x="761.5" y="321.5" width="77" height="7"/><rect x="761.5" y="328.5" width="77" height="6"/><rect x="761.5" y="334.5" width="137" height="7"/><rect x="761.5" y="341.5" width="197" height="7"/><rect x="761.5" y="348.5" width="161" height="7"/><rect x="761.5" y="355.5" width="127" height="7"/><rect x="761.5" y="362.5" width="81" height="7"/><rect x="761.5" y="369.5" width="104" height="7"/><rect x="761.5" y="376.5" width="161" height="7"/><rect x="761.5" y="383.5" width="148" height="7"/><rect x="761.5" y="390.5" width="137" height="7"/><rect x="761.5" y="397.5" width="93" height="7"/><rect x="761.5" y="404.5" width="254" height="7"/><rect x="761.5" y="411.5" width="197" height="7"/><rect x="761.5" y="418.5" width="89" height="7"/><rect x="761.5" y="425.5" width="84" height="6"/><rect x="761.5" y="431.5" width="89" height="7"/><rect x="761.5" y="438.5" width="111" height="7"/><rect x="761.5" y="445.5" width="111" height="7"/><rect x="761.5" y="452.5" width="104" height="7"/><rect x="761.5" y="459.5" width="118" height="7"/><rect x="761.5" y="466.5" width="222" height="7"/><rect x="761.5" y="473.5" width="148" height="7"/><rect x="761.5" y="480.5" width="161" height="7"/><rect x="761.5" y="487.5" width="296" height="7"/><rect x="761.5" y="494.5" width="104" height="7"/><rect x="761.5" y="501.5" width="111" height="7"/><rect x="761.5" y="508.5" width="148" height="7"/><rect x="761.5" y="515.5" width="104" height="7"/><rect x="761.5" y="522.5" width="104" height="6"/><rect x="761.5" y="528.5" width="99" height="7"/><rect x="761.5" y="535.5" width="148" height="7"/><rect x="761.5" y="542.5" width="444" height="7"/><rect x="761.5" y="549.5" width="118" height="7"/><rect x="761.5" y="556.5" width="99" height="7"/><rect x="761.5" y="563.5" width="178" height="7"/><rect x="761.5" y="570.5" width="148" height="7"/><rect x="761.5" y="577.5" width="161" height="7"/><rect x="761.5" y="584.5" width="148" height="7"/><rect x="761.5" y="591.5" width="148" height="7"/><rect x="761.5" y="598.5" width="148" height="7"/><rect x="761.5" y="605.5" width="161" height="7"/><rect x="761.5" y="612.5" width="71" height="7"/><rect x="761.5" y="619.5" width="84" height="6"/><rect x="761.5" y="632.5" width="35" height="7"/><rect x="761.5" y="639.5" width="28" height="7"/><rect x="761.5" y="646.5" width="68" height="7"/><rect x="761.5" y="653.5" width="28" height="7"/><rect x="761.5" y="660.5" width="28" height="7"/><rect x="761.5" y="667.5" width="28" height="7"/></g>
<g stroke="#000" stroke-width="1" fill="none" shape-rendering="crispEdges"><path d="M761.5 279.5H1258.5V674.5H761.5Z"/><path d="M761.5 277V282"/><path d="M796.5 277V282"/><path d="M832.5 277V282"/><path d="M868.5 277V282"/><path d="M903.5 277V282"/><path d="M938.5 277V282"/><path d="M974.5 277V282"/><path d="M1010.5 277V282"/><path d="M1045.5 277V282"/><path d="M1080.5 277V282"/><path d="M1116.5 277V282"/><path d="M1152.5 277V282"/><path d="M1187.5 277V282"/><path d="M1222.5 277V282"/><path d="M1258.5 277V282"/><path d="M759 306.5H762"/><path d="M759 334.5H762"/><path d="M759 361.5H762"/><path d="M759 389.5H762"/><path d="M759 417.5H762"/><path d="M759 445.5H762"/><path d="M759 472.5H762"/><path d="M759 500.5H762"/><path d="M759 528.5H762"/><path d="M759 556.5H762"/><path d="M759 583.5H762"/><path d="M759 611.5H762"/><path d="M759 639.5H762"/><path d="M759 667.5H762"/></g>
<g font-size="12.2" fill="#000"><text x="761" y="271" text-anchor="middle">0</text><text x="832" y="271" text-anchor="middle">1000</text><text x="903" y="271" text-anchor="middle">2000</text><text x="974" y="271" text-anchor="middle">3000</text><text x="1045" y="271" text-anchor="middle">4000</text><text x="1116" y="271" text-anchor="middle">5000</text><text x="1187" y="271" text-anchor="middle">6000</text><text x="1258" y="271" text-anchor="middle">7000</text><text x="756.7" y="340" text-anchor="end">10</text><text x="756.7" y="395" text-anchor="end">20</text><text x="756.7" y="451" text-anchor="end">30</text><text x="756.7" y="506" text-anchor="end">40</text><text x="756.7" y="562" text-anchor="end">50</text><text x="756.7" y="617" text-anchor="end">60</text><text x="756.7" y="673" text-anchor="end">70</text><text x="974.9" y="246" font-size="12.5" textLength="67.6" lengthAdjust="spacingAndGlyphs">Velocity  m/s</text><text transform="translate(732.6 476.4) rotate(-90)" text-anchor="middle" textLength="52.9" lengthAdjust="spacingAndGlyphs">Depth  m.</text></g>
</svg>
</div>
</body>
</html>
